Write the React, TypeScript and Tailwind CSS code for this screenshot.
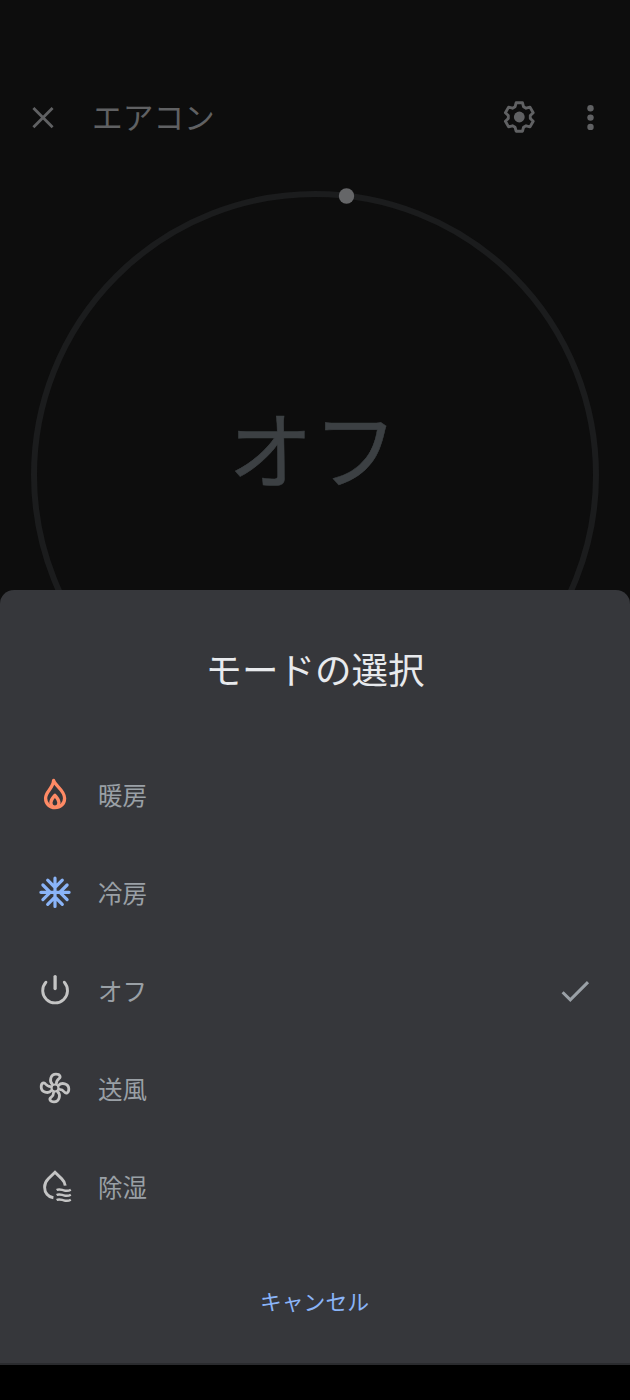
import React, { useState } from 'react';

interface IconProps {
  className?: string;
}

const FlameIcon: React.FC<IconProps> = ({ className }) => (
  <svg viewBox="0 0 40 40" className={className} fill="none" stroke="currentColor" strokeWidth="3.3" strokeLinejoin="round">
    <path d="M18.6 6.4C20 11.8 29.6 16 29.6 24.2C29.6 30 25.4 33.6 20 33.6C14.6 33.6 10.6 29.8 10.6 24.2C10.6 17.2 18.2 14.6 18.6 6.4Z" />
    <path d="M19.9 21.3C18.2 23.4 15.9 25.4 15.9 28.6C15.9 31.4 17.4 33.2 19.9 33.2C22.4 33.2 23.9 31.4 23.9 28.6C23.9 25.4 21.6 23.4 19.9 21.3Z" />
  </svg>
);

const SnowIcon: React.FC<IconProps> = ({ className }) => (
  <svg viewBox="-20 -20.3 40 40" className={className} fill="none" stroke="currentColor" strokeWidth="3.2" strokeLinecap="round">
    {[0, 90, 180, 270].map((angle) => (
      <g key={angle} transform={`rotate(${angle})`}>
        <path d="M0 0V-14.1M-7.3 -12.1L0 -4.8L7.3 -12.1" />
      </g>
    ))}
  </svg>
);

const PowerIcon: React.FC<IconProps> = ({ className }) => (
  <svg viewBox="0 0 40 40" className={className} fill="none" stroke="currentColor" strokeWidth="2.9" strokeLinecap="round">
    <path d="M10.9 12.2A12.4 12.4 0 1 0 29.3 12.2" />
    <path d="M20.1 6.6V18.6" strokeWidth="3.3" />
  </svg>
);

const FanIcon: React.FC<IconProps> = ({ className }) => (
  <svg viewBox="-20 -20 40 40" className={className} fill="none" stroke="currentColor" strokeWidth="2.8" strokeLinecap="round" strokeLinejoin="round">
    <circle r="3.5" strokeWidth="2.2" />
    {[0, 90, 180, 270].map((angle) => (
      <g key={angle} transform={`rotate(${angle})`}>
        <path d="M-2.6 -3.6C-6 -6.6 -4.6 -13.8 1 -13.8C5.4 -13.8 5.9 -10.8 4 -9.4C2.2 -8 1.4 -7 1.4 -4.4" />
      </g>
    ))}
  </svg>
);

const DryIcon: React.FC<IconProps> = ({ className }) => (
  <svg viewBox="0 0 40 40" className={className} fill="none" stroke="currentColor" strokeWidth="2.9">
    <path d="M18.4 31.8C13 31 9.6 26.6 9.6 21.2C9.6 17.6 11.1 15 13.3 12.8L20 6.3L26.8 12.9C28.9 15 30 17.2 30.2 19.6" />
    {[24.3, 29.3, 34.3].map((y) => (
      <path
        key={y}
        strokeWidth="2.3"
        d={`M21.6 ${y - 0.2}C24 ${y - 1.6} 26 ${y - 0.6} 28.7 ${y}C31.4 ${y + 0.8} 33.4 ${y + 0.8} 35.8 ${y - 0.6}`}
      />
    ))}
  </svg>
);

const modes = [
  { id: 'heat', label: '暖房', Icon: FlameIcon, color: 'text-[#ff8a65]' },
  { id: 'cool', label: '冷房', Icon: SnowIcon, color: 'text-[#8ab4f8]' },
  { id: 'off', label: 'オフ', Icon: PowerIcon, color: 'text-[#c4c4c4]' },
  { id: 'fan', label: '送風', Icon: FanIcon, color: 'text-[#c4c4c4]' },
  { id: 'dry', label: '除湿', Icon: DryIcon, color: 'text-[#c4c4c4]' },
];

const App: React.FC = () => {
  const [mode, setMode] = useState('off');

  return (
    <div className="w-[630px] h-[1400px] flex flex-col overflow-hidden bg-[#0d0d0d] font-['Noto_Sans_CJK_JP',sans-serif]">
      {/* App bar */}
      <header className="h-[150px] shrink-0 flex items-center pt-[84px] pl-[23px] pr-[20px] text-[#606163]">
        <button aria-label="閉じる">
          <svg viewBox="0 0 40 40" className="w-10 h-10" stroke="currentColor" strokeWidth="2.8">
            <path d="M10.4 11L29.6 30.2M29.6 11L10.4 30.2" />
          </svg>
        </button>
        <h1 className="flex-1 ml-[29px] pb-[3px] text-[30.7px] leading-10">エアコン</h1>
        <button aria-label="設定">
          <svg viewBox="-20.3 -20 40 40" className="w-10 h-10" fill="none" stroke="currentColor" strokeWidth="2.9" strokeLinejoin="round">
            <path d="M-3.2 -14.2H3.2L4.2 -10.3L6.8 -8.8L10.7 -9.9L13.9 -4.3L11 -1.5V1.5L13.9 4.3L10.7 9.9L6.8 8.8L4.2 10.3L3.2 14.2H-3.2L-4.2 10.3L-6.8 8.8L-10.7 9.9L-13.9 4.3L-11 1.5V-1.5L-13.9 -4.3L-10.7 -9.9L-6.8 -8.8L-4.2 -10.3Z" />
            <circle r="5.4" fill="currentColor" stroke="none" />
          </svg>
        </button>
        <button aria-label="その他" className="ml-[31px]">
          <svg viewBox="-20 -20 40 40" className="w-10 h-10" fill="currentColor">
            <circle cx="0.5" cy="-8.7" r="3.2" />
            <circle cx="0.5" cy="0.6" r="3.2" />
            <circle cx="0.5" cy="9.9" r="3.2" />
          </svg>
        </button>
      </header>

      {/* Temperature dial */}
      <div className="relative h-[440px] shrink-0">
        <svg viewBox="0 0 630 440" className="w-full h-full" fill="none">
          <circle cx="315" cy="325" r="281" stroke="#1b1c1d" strokeWidth="6" />
          <circle cx="346.5" cy="46" r="7.7" fill="#656668" />
        </svg>
        <div className="absolute left-0 right-[4px] top-[246px] text-center text-[85px] leading-[100px] text-[#3c4043] [-webkit-text-stroke:0.5px_#3c4043]">
          オフ
        </div>
      </div>

      {/* Mode picker */}
      <section className="h-[775px] shrink-0 flex flex-col rounded-t-[14px] bg-[#36373b] border-b-2 border-[#2a2b2e]">
        <h2 className="h-[155px] pt-[53px] text-center text-[36.5px] leading-[52px] text-[#e8eaed]">
          モードの選択
        </h2>
        <ul>
          {modes.map(({ id, label, Icon, color }) => (
            <li key={id}>
              <button onClick={() => setMode(id)} className="w-full h-[98px] flex items-center pl-[35px] pr-[35px]">
                <Icon className={`w-10 h-10 ${color}`} />
                <span className="flex-1 ml-[23px] pt-[2px] text-left text-[24.5px] leading-9 text-[#9aa0a6]">{label}</span>
                {mode === id && (
                  <svg viewBox="0 0 40 40" className="w-10 h-10" fill="none" stroke="#9aa0a6" strokeWidth="3">
                    <path d="M7.6 22.2L15.3 29.8L33 12.1" />
                  </svg>
                )}
              </button>
            </li>
          ))}
        </ul>
        <button className="mx-auto mt-[50px] pr-px text-[21.8px] leading-8 text-[#8ab4f8]">キャンセル</button>
      </section>

      {/* System navigation area */}
      <div className="flex-1 bg-black" />
    </div>
  );
};

export default App;
